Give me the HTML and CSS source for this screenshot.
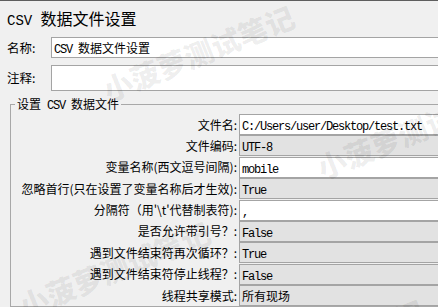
FILE: index.html
```html
<!DOCTYPE html>
<html lang="zh-CN">
<head>
<meta charset="utf-8">
<title>CSV 数据文件设置</title>
<link rel="stylesheet" href="styles.css">
</head>
<body>
<div class="page">
  <div class="title"><span class="mono-title">CSV </span>数据文件设置</div>
  <div class="row">
    <span class="row-label">名称:</span>
    <div class="field white"><span class="mono">CSV </span>数据文件设置</div>
  </div>
  <div class="row">
    <span class="row-label">注释:</span>
    <div class="field white tall"></div>
  </div>
  <fieldset class="group">
    <legend>设置<span class="mono"> CSV </span>数据文件</legend>
    <div class="grid">
      <span class="lbl">文件名:</span><div class="field white"><span class="mono">C:/Users/user/Desktop/test.txt</span></div>
      <span class="lbl">文件编码:</span><div class="field gray"><span class="mono">UTF-8</span></div>
      <span class="lbl">变量名称(西文逗号间隔):</span><div class="field white"><span class="mono">mobile</span></div>
      <span class="lbl">忽略首行(只在设置了变量名称后才生效):</span><div class="field gray"><span class="mono">True</span></div>
      <span class="lbl">分隔符（用'\t'代替制表符):</span><div class="field white"><span class="mono">,</span></div>
      <span class="lbl">是否允许带引号？:</span><div class="field gray"><span class="mono">False</span></div>
      <span class="lbl">遇到文件结束符再次循环？:</span><div class="field gray"><span class="mono">True</span></div>
      <span class="lbl">遇到文件结束符停止线程？:</span><div class="field gray"><span class="mono">False</span></div>
      <span class="lbl">线程共享模式:</span><div class="field gray">所有现场</div>
    </div>
  </fieldset>
</div>
<div class="watermarks" aria-hidden="true">
  <span class="wm wm1">小菠萝测试笔记</span>
  <span class="wm wm2">小菠萝测试笔记</span>
  <span class="wm wm3">小菠萝测试笔记</span>
  <span class="wm wm4">小菠萝测试笔记</span>
</div>
</body>
</html>
```
FILE: styles.css
```css
html, body {
  margin: 0;
  padding: 0;
}
body {
  width: 438px;
  height: 307px;
  overflow: hidden;
  background: #f0f0f0;
  border-top: 1px solid #5e5e5e;
  box-sizing: border-box;
  position: relative;
  font-family: "Noto Sans CJK SC", "Noto Sans", sans-serif;
  font-size: 12px;
  color: #000;
}
.page {
  display: flex;
  flex-direction: column;
  margin-right: -12px;
}
.title {
  padding: 7px 0 0 7px;
  height: 21px;
  line-height: 21px;
  font-size: 16px;
  white-space: pre;
}
.mono-title {
  font-family: "Liberation Mono", monospace;
  font-size: 14px;
}
.mono {
  font-family: "Liberation Mono", monospace;
  font-size: 12px;
  letter-spacing: -1.2px;
  white-space: pre;
}
.row {
  display: flex;
  align-items: center;
  margin-top: 8px;
}
.row + .row { margin-top: 7px; }
.row-label {
  width: 44px;
  padding-left: 7px;
  line-height: 16px;
  font-size: 12.5px;
}
.field {
  flex: 1;
  box-sizing: border-box;
  height: 21px;
  border: 1px solid #a4a4a4;
  padding-left: 2px;
  line-height: 19px;
  white-space: nowrap;
  overflow: hidden;
}
.field.tall { height: 26px; }
.white { background: #ffffff; }
.gray { background: #e2e2e2; }
.group {
  margin: 6px 0 0 10px;
  padding: 0;
  border: 1px solid #a8a8a8;
  min-width: 0;
}
.group legend {
  margin-left: 4px;
  padding: 0 2px;
  line-height: 14px;
  height: 14px;
  white-space: nowrap;
}
.grid {
  display: grid;
  grid-template-columns: 226px 1fr;
  column-gap: 2px;
  grid-auto-rows: 21px;
  row-gap: 0.4px;
  padding-top: 3px;
}
.lbl {
  text-align: right;
  white-space: nowrap;
  align-self: center;
  line-height: 16px;
  font-size: 12px;
}
.watermarks {
  position: absolute;
  inset: 0;
  overflow: hidden;
  pointer-events: none;
}
.wm {
  position: absolute;
  font-family: "Noto Sans CJK SC", sans-serif;
  font-weight: 900;
  font-size: 29px;
  line-height: 30px;
  color: rgba(0, 0, 0, 0.07);
  white-space: nowrap;
  transform-origin: 0 50%;
  transform: rotate(-22deg);
}
.wm1 { left: 104px; top: 74px; }
.wm2 { left: 318px; top: 152px; }
.wm3 { left: 20px; top: 290px; }
.wm4 { left: 234px; top: 368px; }
```
